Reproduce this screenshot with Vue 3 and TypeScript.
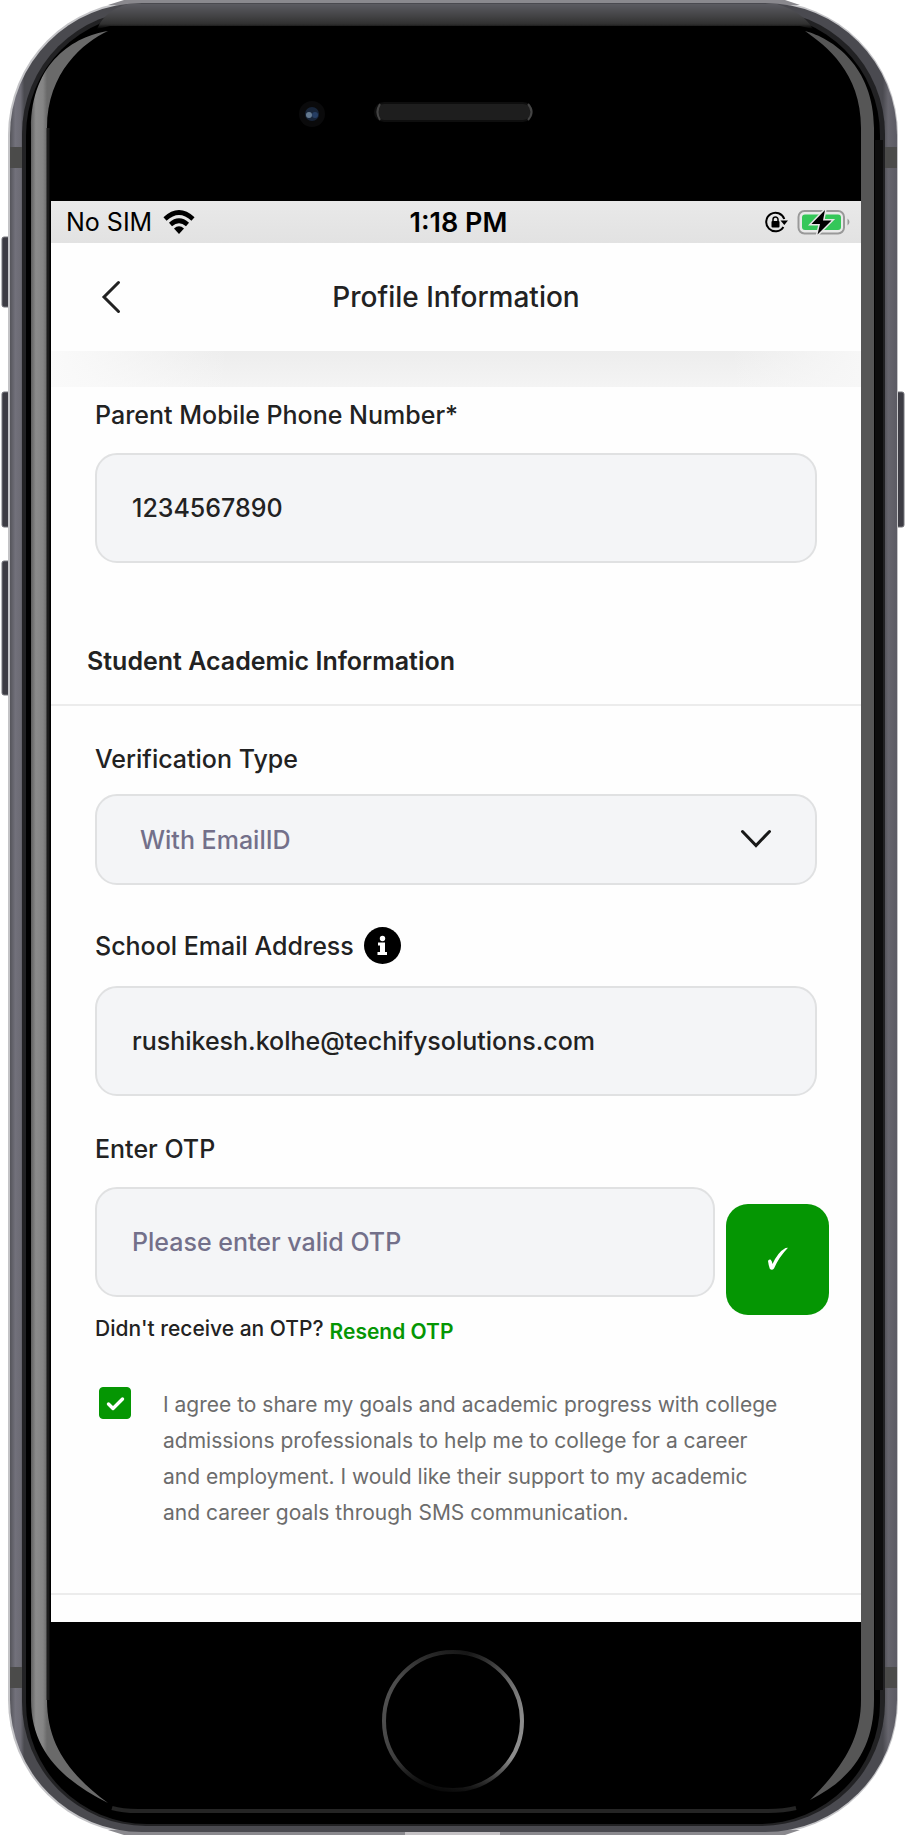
<script setup lang="ts">
import { ref } from 'vue'

const phone = ref('1234567890')
const verification = ref('With EmailID')
const email = ref('rushikesh.kolhe@techifysolutions.com')
const otp = ref('')
const agreed = ref(true)
const consentLines: string[] = [
  'I agree to share my goals and academic progress with college',
  'admissions professionals to help me to college for a career',
  'and employment. I would like their support to my academic',
  'and career goals through SMS communication.',
]
</script>

<template>
  <div class="device">
    <svg class="shell" viewBox="0 0 905 1835" preserveAspectRatio="none" aria-hidden="true">
      <defs>
        <linearGradient id="side" x1="0" x2="1" y1="0" y2="0">
          <stop offset="0" stop-color="#55555b" />
          <stop offset="0.006" stop-color="#72717b" />
          <stop offset="0.012" stop-color="#6c6b74" />
          <stop offset="0.016" stop-color="#4a4a4f" />
          <stop offset="0.984" stop-color="#4a4a50" />
          <stop offset="0.99" stop-color="#66656d" />
          <stop offset="1" stop-color="#5c5b64" />
        </linearGradient>
        <linearGradient id="topEdge" x1="0" x2="0" y1="0" y2="1">
          <stop offset="0" stop-color="#5b5b61" />
          <stop offset="0.5" stop-color="#424244" />
          <stop offset="0.8" stop-color="#303030" />
          <stop offset="1" stop-color="#000" />
        </linearGradient>
        <linearGradient id="stripL" gradientUnits="userSpaceOnUse" x1="31" x2="47" y1="0" y2="0">
          <stop offset="0" stop-color="#606060" />
          <stop offset="0.3" stop-color="#8b8b8b" />
          <stop offset="0.75" stop-color="#858585" />
          <stop offset="1" stop-color="#6a6a6a" />
        </linearGradient>
        <linearGradient id="ring" x1="0" x2="1" y1="0.2" y2="0.5">
          <stop offset="0" stop-color="#555" />
          <stop offset="0.5" stop-color="#222" />
          <stop offset="1" stop-color="#8c8c8c" />
        </linearGradient>
        <linearGradient id="ringFade" x1="0" x2="0" y1="0" y2="1">
          <stop offset="0" stop-color="#000" stop-opacity="0.4" />
          <stop offset="0.2" stop-color="#000" stop-opacity="0" />
          <stop offset="0.75" stop-color="#000" stop-opacity="0" />
          <stop offset="1" stop-color="#000" stop-opacity="0.95" />
        </linearGradient>
      </defs>

      <g fill="#3d3c44" stroke="#77767d" stroke-width="1">
        <rect x="2" y="237" width="10" height="70" rx="2" />
        <rect x="2" y="392" width="10" height="135" rx="2" />
        <rect x="2" y="561" width="10" height="134" rx="2" />
        <rect x="893" y="392" width="11" height="135" rx="2" />
      </g>

      <rect x="8" y="1" width="890" height="1833" rx="134" fill="#c4c4c7" />
      <path d="M124 0H785L800 5H108ZM124 1835H785L800 1830H108Z" fill="#8a898e" />
      <rect x="10" y="3" width="887" height="1829" rx="132" fill="url(#side)" />
      <path d="M10 147h12v21H10zM885 147h12v21h-12zM10 1667h12v21H10zM885 1667h12v21h-12z" fill="#4b4b4a" />
      <path d="M405 1832h95v3h-95z" fill="#c4c1c4" />
      <rect x="22" y="10" width="863" height="1816" rx="124" fill="#222224" />
      <rect x="26" y="14" width="854" height="1810" rx="121" fill="#000" />
      <path d="M128 4H777Q803 12 813 29L800 26H110L97 29Q105 10 128 4Z" fill="url(#topEdge)" />
      <rect x="875" y="140" width="8" height="1550" fill="#0d0d0d" />

      <path d="M108 31C75 36 31 62 31 128V1700C31 1750 62 1780 108 1803C70 1775 47 1745 47 1700V128C47 72 84 42 108 31Z" fill="url(#stripL)" />
      <path d="M805 31C832 38 874 66 874 128V1700C874 1750 850 1780 810 1800C842 1768 861 1740 861 1700V128C861 72 826 46 805 31Z" fill="#565656" />
      <path d="M48 128v1572" stroke="#1c1c1c" stroke-width="3" />
      <path d="M112 1808Q122 1811 138 1811H768Q784 1811 796 1808" fill="none" stroke="#252525" stroke-width="4" />

      <circle cx="312" cy="114" r="13" fill="#0a0a0b" />
      <circle cx="312" cy="114" r="7" fill="#172438" />
      <circle cx="309" cy="115" r="3" fill="#64798f" />
      <circle cx="315" cy="115" r="3" fill="#263e63" />
      <rect x="375" y="103" width="157" height="18" rx="9" fill="#1e1e1e" stroke="#0e0e0e" stroke-width="2" />
      <path d="M380 104q-5 8 0 16M528 104q7 8 0 16" fill="none" stroke="#444" stroke-width="2" />
      <circle cx="453" cy="1721" r="69" fill="none" stroke="url(#ring)" stroke-width="4" />
      <rect x="380" y="1649" width="146" height="146" fill="url(#ringFade)" />
    </svg>

    <main class="screen">
      <div class="status">
        <div class="carrier">
          <span>No SIM</span>
          <svg width="32" height="24" viewBox="0 0 32 24" aria-label="Wi-Fi">
            <path d="M2 9Q16-4 30 9M7.500 14.500Q16 7 24.500 14.500" fill="none" stroke="#000" stroke-width="4.600" />
            <path d="M11 18.500Q16 14 21 18.500L16 24Z" />
          </svg>
        </div>
        <span class="time">1:18 PM</span>
        <div class="indicators">
          <svg width="23" height="24" viewBox="0 0 23 24" aria-label="Orientation lock">
            <path d="M18.400 17A9.300 9.300 0 1 1 19.300 9" fill="none" stroke="#000" stroke-width="2" />
            <path d="M15.500 10.500H23L19.300 15Z" />
            <rect x="6.500" y="11" width="8" height="6.500" rx="1" />
            <path d="M8 11.500V9.500a2.500 2.500 0 0 1 5 0v2" fill="none" stroke="#000" stroke-width="1.500" />
          </svg>
          <svg width="54" height="26" viewBox="0 0 54 26" aria-label="Battery charging">
            <rect x="1.500" y="2" width="45.500" height="22.500" rx="6" fill="#e9e9e9" stroke="#999" stroke-width="2" />
            <rect x="5" y="5.500" width="39" height="15.500" rx="3" fill="#35c759" />
            <path d="M50.500 9.500q4 3.500 0 7z" fill="#999" />
            <path d="M28 1L14.500 15H23L20.500 25.500L34.500 11.500H26Z" stroke="#e7e7e7" stroke-width="3" paint-order="stroke" />
          </svg>
        </div>
      </div>

      <header class="header">
        <button class="back" type="button" aria-label="Back">
          <svg width="20" height="34" viewBox="0 0 20 34">
            <path d="M17.500 2.500L3 17L17.500 31.500" fill="none" stroke="#222" stroke-width="3" stroke-linecap="round" />
          </svg>
        </button>
        <h1>Profile Information</h1>
      </header>
      <div class="shade"></div>

      <form @submit.prevent>
        <section class="block contact">
          <label for="phone">Parent Mobile Phone Number*</label>
          <input id="phone" v-model="phone" class="field" type="tel" />
        </section>

        <h2>Student Academic Information</h2>

        <section class="block academic">
          <label for="verification">Verification Type</label>
          <div class="picker">
            <select id="verification" v-model="verification" class="field">
              <option>With EmailID</option>
            </select>
            <svg class="arrow" width="32" height="20" viewBox="0 0 32 20" aria-hidden="true">
              <path d="M2.500 2.500L16 16.500L29.500 2.500" fill="none" stroke="#181818" stroke-width="3" stroke-linecap="round" />
            </svg>
          </div>

          <div class="label-row">
            <label for="email">School Email Address</label>
            <button class="info" type="button" aria-label="About school email">
              <svg width="37" height="37" viewBox="0 0 37 37">
                <circle cx="18.500" cy="18.500" r="18.500" />
                <circle cx="18.500" cy="11.500" r="2.700" fill="#fff" />
                <path d="M14 15.500h7v9.500h2v3h-9.500v-3h2.500v-6.500h-2z" fill="#fff" />
              </svg>
            </button>
          </div>
          <input id="email" v-model="email" class="field" type="email" />

          <label class="otp-label" for="otp">Enter OTP</label>
          <div class="otp">
            <div class="otp-entry">
              <input id="otp" v-model="otp" class="field" type="text" placeholder="Please enter valid OTP" />
              <p class="resend">
                <span>Didn't receive an OTP?</span>
                <a href="#resend">Resend OTP</a>
              </p>
            </div>
            <button class="verify" type="submit" aria-label="Verify OTP">
              <svg width="22" height="26" viewBox="0 0 22 26">
                <path d="M1 14Q1.500 12 3.500 12.500Q5 13.500 5.500 17Q11 5 18.500 1L21 .8Q12 10 7 21.500Q5 24 2.800 21.800Q1.500 18 1 14Z" fill="#fff" />
              </svg>
            </button>
          </div>

          <div class="consent">
            <span class="tick">
              <input id="consent" v-model="agreed" type="checkbox" />
              <svg v-if="agreed" width="32" height="32" viewBox="0 0 32 32" aria-hidden="true">
                <path d="M9.500 17L14 21.500L23.500 12" fill="none" stroke="#fff" stroke-width="3.400" stroke-linecap="round" stroke-linejoin="round" />
              </svg>
            </span>
            <label for="consent"><span v-for="line in consentLines" :key="line">{{ line }}</span></label>
          </div>
        </section>
      </form>
    </main>
  </div>
</template>

<style>
body {
  margin: 0;
  background: #fff;
}
</style>

<style scoped>
.device {
  position: relative;
  box-sizing: border-box;
  min-height: 100vh;
  padding: 201px 44px 213px 51px;
  font-family: Inter, "Liberation Sans", sans-serif;
  color: #222;
}
.shell {
  position: absolute;
  inset: 0;
  width: 100%;
  height: 100%;
}
.screen {
  position: relative;
  background: #fefefe;
}
.status {
  display: grid;
  grid-template-columns: 1fr auto 1fr;
  align-items: center;
  height: 42px;
  padding: 0 10px 0 15px;
  background: linear-gradient(#e9e9e9, #e2e2e2);
  color: #000;
  font-size: 25px;
}
.carrier,
.indicators {
  display: flex;
  align-items: center;
  gap: 11px;
}
.indicators {
  justify-content: flex-end;
  gap: 9px;
}
.time {
  font-size: 27px;
  font-weight: 600;
}
.header {
  display: grid;
  grid-template-columns: 40px 1fr 40px;
  align-items: center;
  height: 108px;
  padding: 0 40px;
}
button {
  padding: 0;
  border: 0;
  background: none;
  font: inherit;
  cursor: pointer;
}
.back,
.info,
.verify {
  display: flex;
  align-items: center;
  justify-content: center;
}
h1 {
  margin: 0;
  font-size: 28px;
  font-weight: 500;
  line-height: 36px;
  text-align: center;
}
.shade {
  height: 36px;
  background:
    linear-gradient(90deg, #fafafa, #fafafa00 22%, #fafafa00 84%, #f7f7f7),
    linear-gradient(#ededed, #f4f4f4);
}
form {
  padding-bottom: 27px;
}
.block {
  display: flex;
  flex-direction: column;
  padding: 0 44px;
}
.contact {
  padding-top: 12px;
}
.block label {
  font-size: 25px;
  font-weight: 500;
  line-height: 32px;
}
.field {
  box-sizing: border-box;
  width: 100%;
  height: 110px;
  margin: 22px 0 0;
  padding: 0 35px;
  border: 2px solid #e0e1e2;
  border-radius: 22px;
  outline: 0;
  background: #f4f5f7;
  color: #222;
  font-family: inherit;
  font-size: 25px;
  font-weight: 500;
}
.field::placeholder {
  color: #73708a;
  opacity: 1;
}
h2 {
  margin: 82px 0 0;
  padding: 0 36px 27px;
  border-bottom: 2px solid #ececec;
  font-size: 25px;
  font-weight: 600;
  line-height: 32px;
}
.academic {
  padding-top: 37px;
  padding-bottom: 62px;
  border-bottom: 2px solid #ececec;
}
.picker {
  position: relative;
  margin-top: 19px;
}
.picker .field {
  display: block;
  height: 91px;
  margin: 0;
  padding: 0 43px;
  appearance: none;
  color: #73708a;
}
.arrow {
  position: absolute;
  top: 35px;
  right: 45px;
  pointer-events: none;
}
.label-row {
  display: flex;
  align-items: center;
  gap: 10px;
  margin-top: 42px;
}
.otp-label {
  margin-top: 37px;
}
.otp {
  display: flex;
  align-items: flex-start;
  gap: 11px;
  margin-right: -12px;
}
.otp-entry {
  flex: 1;
}
.verify {
  width: 103px;
  height: 111px;
  margin-top: 39px;
  border-radius: 22px;
  background: #059603;
}
.resend {
  display: flex;
  align-items: flex-start;
  gap: 6px;
  margin: 18px 0 0;
  font-size: 21px;
  font-weight: 500;
  line-height: 28px;
}
.resend a {
  color: #059603;
  font-weight: 600;
  line-height: 34px;
  text-decoration: none;
}
.consent {
  display: flex;
  align-items: flex-start;
  gap: 32px;
  margin-top: 38px;
  padding-left: 4px;
}
.tick {
  display: grid;
}
.tick > * {
  grid-area: 1 / 1;
  pointer-events: none;
}
.tick input {
  width: 32px;
  height: 32px;
  margin: 0;
  appearance: none;
  border-radius: 4px;
  border: 1px solid #059603;
  pointer-events: auto;
}
.tick input:checked {
  background: #059603;
}
.block .consent label {
  color: #6c6c6c;
  font-size: 21px;
  font-weight: 400;
  line-height: 36px;
}
.consent label span {
  display: block;
}
</style>
